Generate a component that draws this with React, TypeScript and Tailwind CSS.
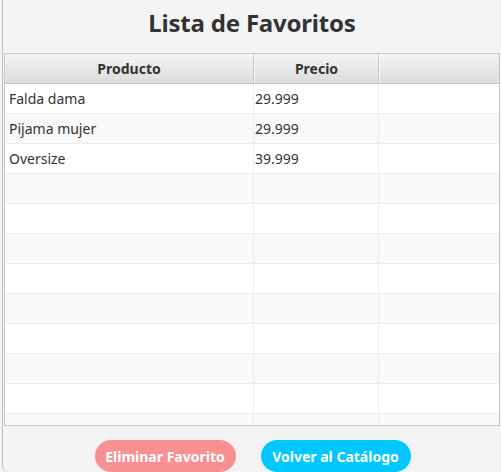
import React from 'react';

const rows = [
  { producto: 'Falda dama', precio: '29.999' },
  { producto: 'Pijama mujer', precio: '29.999' },
  { producto: 'Oversize', precio: '39.999' },
  ...Array.from({ length: 9 }, () => ({ producto: '', precio: '' })),
];

export default function App() {
  return (
    <div className="w-[501px] h-[472px] overflow-hidden bg-[#f4f4f4] font-['Noto_Sans',sans-serif]">
      <div className="h-full ml-[2px] border-l border-[#bfbfbf] rounded-bl-[6px] flex flex-col">
        {/* Title */}
        <div className="h-[53px] flex items-center justify-center pb-[7px]">
          <h1 className="text-[24px] font-bold text-[#333] tracking-[-0.2px]">Lista de Favoritos</h1>
        </div>

        {/* Table */}
        <div className="h-[375px] ml-[1px] mr-[1px] border border-[#c8c8c8] bg-[#f9f9f9] overflow-hidden">
          <div className="flex h-[30px] bg-gradient-to-b from-[#f4f4f4] to-[#dcdcdc] border-b border-[#c8c8c8] text-[14px] font-bold text-[#333]">
            <div className="w-[249px] flex items-center justify-center border-r border-[#c8c8c8]">Producto</div>
            <div className="w-[125px] flex items-center justify-center border-r border-[#c8c8c8] border-l border-l-[#f6f6f6]">Precio</div>
            <div className="flex-1 border-l border-l-[#f6f6f6]" />
          </div>
          {rows.map((r, i) => (
            <div
              key={i}
              className={`flex h-[30px] border-b border-[#ededed] text-[14px] text-[#333] ${i % 2 === 0 ? 'bg-white' : 'bg-[#f9f9f9]'}`}
            >
              <div className="w-[249px] flex items-center pl-[4px] border-r border-[#ededed]">{r.producto}</div>
              <div className="w-[125px] flex items-center pl-[1px] border-r border-[#ededed]">{r.precio}</div>
              <div className="flex-1" />
            </div>
          ))}
        </div>

        {/* Buttons */}
        <div className="flex justify-center gap-[25px] pt-[14px] pl-[1px]">
          <button className="h-[32px] w-[141px] rounded-full bg-[#f79191] text-white text-[14px] font-bold">
            Eliminar Favorito
          </button>
          <button className="h-[32px] w-[150px] rounded-full bg-[#00c8ff] text-white text-[14px] font-bold">
            Volver al Catálogo
          </button>
        </div>
      </div>
    </div>
  );
}
